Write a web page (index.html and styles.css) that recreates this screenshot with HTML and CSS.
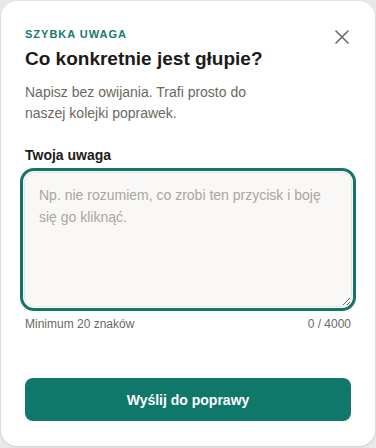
FILE: index.html
```html
<html>
  <head>
    <meta charset="utf-8">
    <title>Szybka uwaga</title>
    <link rel="stylesheet" href="styles.css">
  </head>
  <body>
    <div class="dialog">
      <div class="dialog-head">
        <div>
          <p class="eyebrow">SZYBKA UWAGA</p>
          <h1>Co konkretnie jest głupie?</h1>
        </div>
        <button class="close" aria-label="Zamknij">
          <svg width="14" height="14" viewBox="0 0 14 14">
            <path d="M1 1L13 13M13 1L1 13" stroke="#6f6a65" stroke-width="1.6" stroke-linecap="round"/>
          </svg>
        </button>
      </div>
      <p class="lead">Napisz bez owijania. Trafi prosto do<br>naszej kolejki poprawek.</p>

      <label class="field-label" for="note">Twoja uwaga</label>
      <div class="field-ring">
        <textarea id="note" placeholder="Np. nie rozumiem, co zrobi ten przycisk i boję się go kliknąć."></textarea>
      </div>
      <div class="field-meta">
        <span>Minimum 20 znaków</span>
        <span>0 / 4000</span>
      </div>

      <button class="submit">Wyślij do poprawy</button>
    </div>
  </body>
</html>
```

FILE: styles.css
```css
body {
    margin: 0;
    background: #e9e9e8;
    font-family: "Liberation Sans", Arial, sans-serif;
}

.dialog {
    box-sizing: border-box;
    width: 374px;
    height: 445px;
    margin: 1px 1px 0 1px;
    padding: 26px 24px 25px 24px;
    background: #fff;
    border-radius: 16px;
    box-shadow: 0 1px 3px rgba(0, 0, 0, 0.12);
    display: flex;
    flex-direction: column;
}

.dialog-head {
    display: flex;
    justify-content: space-between;
    align-items: flex-start;
}

.eyebrow {
    margin: 0;
    font-size: 11px;
    font-weight: bold;
    letter-spacing: 1px;
    color: #177a6e;
    line-height: 14px;
}

h1 {
    margin: 5px 0 0 0;
    font-size: 19px;
    line-height: 26px;
    color: #1c1b1a;
}

.close {
    border: none;
    background: none;
    padding: 0;
    margin: 3px 2px 0 0;
    cursor: pointer;
    width: 14px;
    height: 14px;
    display: flex;
}

.lead {
    margin: 10px 0 0 0;
    font-size: 14px;
    line-height: 21px;
    color: #6d6762;
}

.field-label {
    margin-top: 22px;
    font-size: 14px;
    font-weight: bold;
    color: #1c1b1a;
    line-height: 18px;
}

.field-ring {
    margin-top: 4px;
    margin-left: -5px;
    margin-right: -5px;
    border: 3px solid #137468;
    border-radius: 14px;
    padding: 1px;
    display: flex;
}

textarea {
    flex: 1;
    box-sizing: border-box;
    height: 135px;
    border: 1px solid #e8e6e2;
    border-radius: 10px;
    background: #f9f8f6;
    padding: 11px 14px 10px 14px;
    font-family: "Liberation Sans", Arial, sans-serif;
    font-size: 14px;
    line-height: 22px;
    color: #1c1b1a;
    outline: none;
    resize: vertical;
}

textarea::placeholder {
    color: #a9a5a0;
}

.field-meta {
    display: flex;
    justify-content: space-between;
    margin-top: 5px;
    font-size: 12px;
    line-height: 16px;
    color: #6d6762;
}

.submit {
    margin-top: auto;
    height: 43px;
    border: none;
    border-radius: 8px;
    background: #10776b;
    color: #fff;
    font-family: "Liberation Sans", Arial, sans-serif;
    font-size: 14px;
    font-weight: bold;
    cursor: pointer;
}
```
